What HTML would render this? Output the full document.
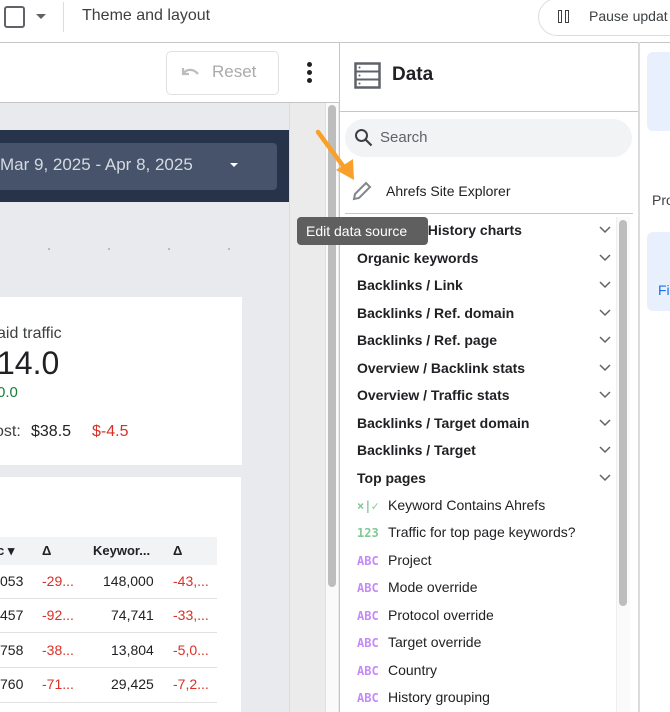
<!DOCTYPE html>
<html><head><style>
*{margin:0;padding:0;box-sizing:border-box}
body{width:670px;height:712px;overflow:hidden;background:#fff;font-family:"Liberation Sans",Arial,sans-serif;position:relative;color:#202124}
.a{position:absolute}
.row{position:absolute;left:357px;font-size:14px;font-weight:bold;color:#202124}
.f{position:absolute;left:357px;font-size:14px;color:#202124}
.f i{font-style:normal;display:inline-block;width:31px;font-size:12px;font-weight:bold;font-family:"DejaVu Sans Mono",monospace;color:#c58af9}
.td{position:absolute;font-size:14px}
.red{color:#d93025}
</style></head><body>
<div class="a" style="left:4px;top:6px;width:21px;height:22px;border:2.5px solid #5f6368;border-radius:3px"></div>
<div class="a" style="left:36px;top:14px;width:0;height:0;border-left:5px solid transparent;border-right:5px solid transparent;border-top:5px solid #5f6368"></div>
<div class="a" style="left:63px;top:2px;width:1px;height:30px;background:#dadce0"></div>
<div class="a" style="left:82px;top:7px;font-size:16px;color:#3c4043">Theme and layout</div>
<div class="a" style="left:538px;top:-2px;width:160px;height:38px;border:1px solid #dadce0;border-radius:19px"></div>
<div class="a" style="left:558px;top:10px;width:4px;height:13px;border:1.5px solid #3c4043"></div>
<div class="a" style="left:565px;top:10px;width:4px;height:13px;border:1.5px solid #3c4043"></div>
<div class="a" style="left:589px;top:8px;font-size:14px;color:#3c4043">Pause updat</div>
<div class="a" style="left:0;top:42px;width:670px;height:1px;background:#c6c6c6"></div>
<div class="a" style="left:0;top:102px;width:339px;height:1px;background:#c6c6c6"></div>
<div class="a" style="left:166px;top:51px;width:113px;height:44px;border:1px solid #e0e0e0;border-radius:5px"></div>
<svg class="a" style="left:180px;top:63px" width="22" height="18" viewBox="0 0 22 18"><path d="M3 5v6h6M3 11C6 6 13 5 18 11" fill="none" stroke="#bdbdbd" stroke-width="2.2"/></svg>
<div class="a" style="left:212px;top:62px;font-size:17px;color:#aaa">Reset</div>
<div class="a" style="left:307px;top:62px;width:5px;height:5px;border-radius:50%;background:#202124"></div>
<div class="a" style="left:307px;top:70px;width:5px;height:5px;border-radius:50%;background:#202124"></div>
<div class="a" style="left:307px;top:78px;width:5px;height:5px;border-radius:50%;background:#202124"></div>
<div class="a" style="left:0;top:103px;width:339px;height:609px;background:#e8eaed"></div>
<div class="a" style="left:289px;top:103px;width:36px;height:609px;background:#ebebeb;border-left:1px solid #dcdcdc"></div>
<div class="a" style="left:325px;top:103px;width:13px;height:609px;background:#fafafa;border-left:1px solid #e0e0e0"></div>
<div class="a" style="left:328px;top:105px;width:8px;height:482px;background:#bdbdbd;border-radius:4px"></div>
<div class="a" style="left:0;top:130px;width:289px;height:72px;background:#263349"></div>
<div class="a" style="left:-6px;top:143px;width:283px;height:47px;background:#46536a;border-radius:4px"></div>
<div class="a" style="left:0;top:155px;font-size:17px;color:#d6dae0">Mar 9, 2025 - Apr 8, 2025</div>
<div class="a" style="left:230px;top:163px;border-left:4px solid transparent;border-right:4px solid transparent;border-top:4px solid #fff"></div>
<div class="a" style="left:48px;top:248px;width:2px;height:2px;background:#bbb"></div>
<div class="a" style="left:108px;top:248px;width:2px;height:2px;background:#bbb"></div>
<div class="a" style="left:168px;top:248px;width:2px;height:2px;background:#bbb"></div>
<div class="a" style="left:228px;top:248px;width:2px;height:2px;background:#bbb"></div>
<div class="a" style="left:0;top:297px;width:242px;height:168px;background:#fff"></div>
<div class="a" style="left:-3px;top:325px;font-size:16px;color:#3c4043">aid traffic</div>
<div class="a" style="left:-3px;top:345px;font-size:32px;color:#202124">14.0</div>
<div class="a" style="left:-3px;top:384px;font-size:15px;color:#188038">0.0</div>
<div class="a" style="left:-5px;top:423px;font-size:16px;color:#3c4043">ost:</div>
<div class="a" style="left:31px;top:423px;font-size:16px">$38.5</div>
<div class="a red" style="left:92px;top:423px;font-size:16px">$-4.5</div>
<div class="a" style="left:0;top:477px;width:241px;height:235px;background:#fff"></div>
<div class="a" style="left:0;top:537px;width:217px;height:28px;background:#f1f3f4"></div>
<div class="td" style="left:-3px;top:543px;font-weight:bold;font-size:13px">c &#9662;</div>
<div class="td" style="left:42px;top:543px;font-weight:bold;font-size:13px">Δ</div>
<div class="td" style="left:93px;top:543px;font-weight:bold;font-size:13px">Keywor...</div>
<div class="td" style="left:173px;top:543px;font-weight:bold;font-size:13px">Δ</div>
<div class="td" style="left:0;top:573px">053</div><div class="td red" style="left:42px;top:573px">-29...</div><div class="td" style="left:103px;top:573px">148,000</div><div class="td red" style="left:173px;top:573px">-43,...</div>
<div class="a" style="left:0;top:598px;width:217px;height:1px;background:#e0e0e0"></div>
<div class="td" style="left:0;top:607px">457</div><div class="td red" style="left:42px;top:607px">-92...</div><div class="td" style="left:111px;top:607px">74,741</div><div class="td red" style="left:173px;top:607px">-33,...</div>
<div class="a" style="left:0;top:632px;width:217px;height:1px;background:#e0e0e0"></div>
<div class="td" style="left:0;top:642px">758</div><div class="td red" style="left:42px;top:642px">-38...</div><div class="td" style="left:111px;top:642px">13,804</div><div class="td red" style="left:173px;top:642px">-5,0...</div>
<div class="a" style="left:0;top:667px;width:217px;height:1px;background:#e0e0e0"></div>
<div class="td" style="left:0;top:676px">760</div><div class="td red" style="left:42px;top:676px">-71...</div><div class="td" style="left:111px;top:676px">29,425</div><div class="td red" style="left:173px;top:676px">-7,2...</div>
<div class="a" style="left:0;top:702px;width:217px;height:1px;background:#e0e0e0"></div>
<div class="a" style="left:339px;top:42px;width:1px;height:670px;background:#c6c6c6"></div>
<svg class="a" style="left:354px;top:62px" width="27" height="27" viewBox="0 0 27 27"><rect x="1.5" y="1.5" width="24" height="24" fill="none" stroke="#5f6368" stroke-width="2.5"/><path d="M1.5 9.5h24M1.5 17.5h24" stroke="#5f6368" stroke-width="2"/><circle cx="5.5" cy="5.5" r="1" fill="#5f6368"/><circle cx="5.5" cy="13.5" r="1" fill="#5f6368"/><circle cx="5.5" cy="21.5" r="1" fill="#5f6368"/></svg>
<div class="a" style="left:392px;top:64px;font-size:19px;font-weight:bold;color:#202124">Data</div>
<div class="a" style="left:340px;top:111px;width:298px;height:1px;background:#c6c6c6"></div>
<div class="a" style="left:345px;top:119px;width:287px;height:38px;background:#f1f3f4;border-radius:19px"></div>
<svg class="a" style="left:354px;top:128px" width="20" height="20" viewBox="0 0 20 20"><circle cx="7.5" cy="7.5" r="5.5" fill="none" stroke="#3c4043" stroke-width="2"/><path d="M11.5 11.5l6 6" stroke="#3c4043" stroke-width="2.2"/></svg>
<div class="a" style="left:380px;top:129px;font-size:15px;color:#5f6368">Search</div>
<svg class="a" style="left:351px;top:180px" width="22" height="22" viewBox="0 0 22 22"><path d="M3 19l1-5L15 3l4 4L8 18z" fill="none" stroke="#80868b" stroke-width="2"/></svg>
<div class="a" style="left:386px;top:183px;font-size:14px;color:#202124">Ahrefs Site Explorer</div>
<div class="a" style="left:345px;top:213px;width:288px;height:1px;background:#c6c6c6"></div>
<div class="row" style="top:222px">Keyword / History charts</div>
<div class="row" style="top:250px">Organic keywords</div>
<div class="row" style="top:277px">Backlinks / Link</div>
<div class="row" style="top:305px">Backlinks / Ref. domain</div>
<div class="row" style="top:332px">Backlinks / Ref. page</div>
<div class="row" style="top:360px">Overview / Backlink stats</div>
<div class="row" style="top:387px">Overview / Traffic stats</div>
<div class="row" style="top:415px">Backlinks / Target domain</div>
<div class="row" style="top:442px">Backlinks / Target</div>
<div class="row" style="top:470px">Top pages</div>
<svg class="a" style="left:598px;top:224px" width="14" height="260" viewBox="0 0 14 260"><g fill="none" stroke="#5f6368" stroke-width="1.5"><path d="M2 3l5 5 5-5"/><path d="M2 31l5 5 5-5"/><path d="M2 58l5 5 5-5"/><path d="M2 86l5 5 5-5"/><path d="M2 113l5 5 5-5"/><path d="M2 141l5 5 5-5"/><path d="M2 168l5 5 5-5"/><path d="M2 196l5 5 5-5"/><path d="M2 223l5 5 5-5"/><path d="M2 251l5 5 5-5"/></g></svg>
<div class="f" style="top:497px"><i style="color:#81c995">×|✓</i>Keyword Contains Ahrefs</div>
<div class="f" style="top:524px"><i style="color:#81c995">123</i>Traffic for top page keywords?</div>
<div class="f" style="top:552px"><i>ABC</i>Project</div>
<div class="f" style="top:579px"><i>ABC</i>Mode override</div>
<div class="f" style="top:607px"><i>ABC</i>Protocol override</div>
<div class="f" style="top:634px"><i>ABC</i>Target override</div>
<div class="f" style="top:662px"><i>ABC</i>Country</div>
<div class="f" style="top:689px"><i>ABC</i>History grouping</div>
<div class="a" style="left:616px;top:217px;width:14px;height:495px;background:#fafafa;border-left:1px solid #eee"></div>
<div class="a" style="left:619px;top:220px;width:8px;height:386px;background:#bdbdbd;border-radius:4px"></div>
<div class="a" style="left:638px;top:42px;width:2px;height:670px;background:#dadce0"></div>
<div class="a" style="left:647px;top:52px;width:30px;height:79px;background:#e8f0fe;border-radius:6px"></div>
<div class="a" style="left:652px;top:192px;font-size:14px;color:#3c4043">Pro</div>
<div class="a" style="left:647px;top:232px;width:30px;height:79px;background:#e8f0fe;border-radius:6px"></div>
<div class="a" style="left:658px;top:282px;font-size:14px;color:#1a73e8">Fi</div>
<div class="a" style="left:297px;top:217px;width:131px;height:28px;background:#5f5f5f;border-radius:4px;color:#fff;font-size:14px;padding:6px 0 0 9px">Edit data source</div>
<svg class="a" style="left:312px;top:126px" width="50" height="60" viewBox="0 0 50 60"><path d="M6 6L34 44" stroke="#f9a02b" stroke-width="4.5" stroke-linecap="round"/><path d="M42 54L24 44 41 33z" fill="#f9a02b"/></svg>
</body></html>
